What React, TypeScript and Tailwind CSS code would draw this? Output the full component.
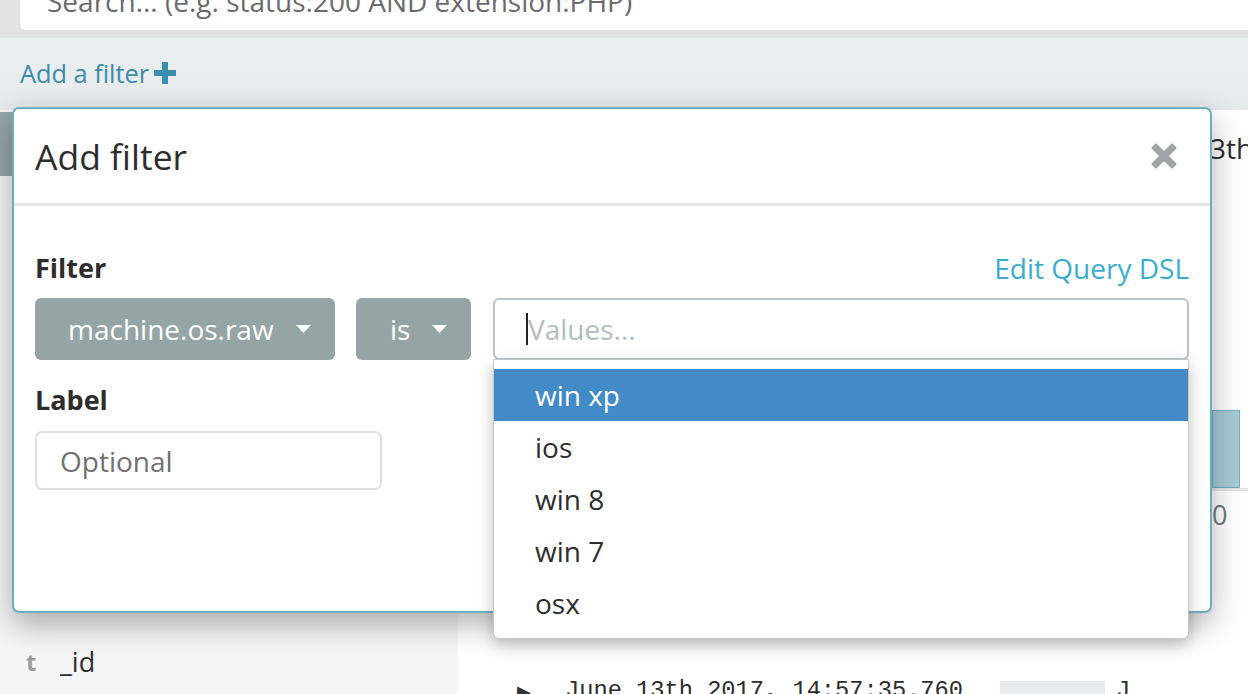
import React from "react";

const Caret = () => (
  <svg width="15" height="8" viewBox="0 0 15 8" className="shrink-0">
    <path d="M0 0 L15 0 L7.5 8 Z" fill="white" />
  </svg>
);

export default function App() {
  const items = ["win xp", "ios", "win 8", "win 7", "osx"];
  return (
    <div className="relative w-[1248px] h-[694px] overflow-hidden bg-white font-['Open_Sans',sans-serif] text-[#2d2d2d]">
      {/* search bar */}
      <div className="h-[38px] bg-[#e2e2e2] pl-[20px] overflow-hidden">
        <div className="h-[30px] bg-white rounded-bl-[6px] overflow-hidden pl-[27px]">
          <div className="mt-[-17px] text-[28px] leading-[36px] text-[#6b6b6b] whitespace-nowrap">
            Search... (e.g. status:200 AND extension:PHP)
          </div>
        </div>
      </div>
      {/* filter bar */}
      <div className="h-[72px] bg-gradient-to-b from-[#ecf0f1] to-[#e6e9ea] pl-[20px] flex items-start pt-[18px]">
        <div className="flex items-center gap-[5px] text-[25.3px] leading-[34px] text-[#3a8dab]">
          <span>Add a filter</span>
          <svg width="22" height="22" viewBox="0 0 22 22">
            <path d="M8 0h6v8h8v6h-8v8H8v-8H0V8h8z" fill="#3a8dab" />
          </svg>
        </div>
      </div>
      {/* main */}
      <div className="flex h-[584px]">
        <div className="w-[458px] shrink-0 bg-[#f5f5f5] flex flex-col">
          <div className="mt-[2px] h-[64px] bg-[#95a5a6]" />
          <div className="mt-[466px] flex items-center h-[40px] pl-[26px] text-[27px]">
            <span className="font-bold text-[#9b9b9b] text-[24px] w-[34px]">t</span>
            <span className="text-[#2d2d2d]">_id</span>
          </div>
        </div>
        <div className="flex-1 min-w-0 flex flex-col pl-[42px] relative">
          <div className="mt-[20px] h-[36px] flex justify-end">
            <span className="text-[28px] leading-[36px] whitespace-nowrap w-[38px] overflow-hidden flex">
              <span className="-ml-[16px]">13th</span>
            </span>
          </div>
          <div className="mt-[244px] flex justify-end">
            <div className="w-[38px] flex flex-col">
              <div className="ml-[2px] w-[28px] h-[78px] bg-[#a7cad5] border border-[#6eadc1]" />
              <div className="h-[3px] bg-[#e4e4e4]" />
              <div className="mt-[6px] text-[27px] leading-[36px] text-[#6d7a80] ml-[2px]">0</div>
            </div>
          </div>
          <div className="mt-[127px] h-[4px] bg-[#e6e9ea]" />
          <div className="mt-[16px] flex items-start pl-[17px] leading-[30px] whitespace-nowrap">
            <span className="text-[#333] text-[18px] w-[48px]">▶</span>
            <span className="font-['Liberation_Mono',monospace] text-[23.7px] w-[435px]">June 13th 2017, 14:57:35.760</span>
            <span className="mt-[5px] w-[105px] h-[20px] bg-[#e8ebec] shrink-0" />
            <span className="ml-[11px] font-['Liberation_Mono',monospace] text-[23.7px]">J</span>
          </div>
        </div>
      </div>

      {/* modal */}
      <div className="absolute left-[12px] top-[107px] w-[1200px] h-[506px] bg-white border-2 border-[#6eadc1] rounded-[7px] shadow-[0_12px_30px_rgba(0,0,0,0.3)] flex flex-col">
        <div className="h-[94px] flex items-center justify-between pl-[21px] pr-[33px]">
          <div className="text-[35.5px] leading-[44px] text-[#2d2d2d]">Add filter</div>
          <svg width="26" height="26" viewBox="0 0 26 26">
            <path d="M5 1 L13 9 L21 1 L25 5 L17 13 L25 21 L21 25 L13 17 L5 25 L1 21 L9 13 L1 5 Z" fill="#a1a3a6" stroke="#a1a3a6" strokeWidth="1.5" strokeLinejoin="round" />
          </svg>
        </div>
        <div className="h-[3px] bg-[#e4e4e4]" />
        <div className="flex-1 flex flex-col px-[21px] pt-[44px]">
          <div className="flex items-center justify-between h-[36px]">
            <div className="font-bold text-[27px] leading-[36px]">Filter</div>
            <div className="text-[28px] leading-[36px] text-[#3cadd2]">Edit Query DSL</div>
          </div>
          <div className="mt-[12px] flex items-start">
            <div className="w-[300px] h-[62px] rounded-[6px] bg-[#95a5a6] text-white flex items-center pl-[33px] gap-[22px]">
              <span className="text-[28px] leading-[36px] whitespace-nowrap">machine.os.raw</span>
              <Caret />
            </div>
            <div className="ml-[21px] w-[115px] h-[62px] rounded-[6px] bg-[#95a5a6] text-white flex items-center pl-[34px] gap-[22px]">
              <span className="text-[28px] leading-[36px]">is</span>
              <Caret />
            </div>
            <div className="ml-[22px] flex-1 relative">
              <div className="h-[62px] border-2 border-[#bcc3c8] rounded-[6px] flex items-center pl-[31px]">
                <span className="w-[2px] h-[32px] bg-[#222]" />
                <span className="text-[28px] leading-[36px] text-[#b4bcc2]">Values...</span>
              </div>
              <div className="absolute left-0 right-0 top-[61px] h-[280px] bg-white border border-[#c8c8c8] rounded-b-[6px] shadow-[0_6px_16px_rgba(0,0,0,0.25)] py-[9px] z-10">
                {items.map((it, i) => (
                  <div
                    key={it}
                    className={`h-[52px] flex items-center pl-[41px] text-[28px] leading-[36px] ${i === 0 ? "bg-[#428ac8] text-white" : "text-[#2d2d2d]"}`}
                  >
                    {it}
                  </div>
                ))}
              </div>
            </div>
          </div>
          <div className="mt-[22px] font-bold text-[27px] leading-[36px]">Label</div>
          <div className="mt-[13px] w-[347px] h-[59px] border-2 border-[#e0e0e0] rounded-[7px] flex items-center pl-[23px]">
            <span className="text-[28px] leading-[36px] text-[#717171]">Optional</span>
          </div>
          <div className="mt-[43px] flex justify-end">
            <div className="w-[110px] h-[57px] rounded-[6px] bg-[#7fa6b6]" />
          </div>
        </div>
      </div>
    </div>
  );
}
